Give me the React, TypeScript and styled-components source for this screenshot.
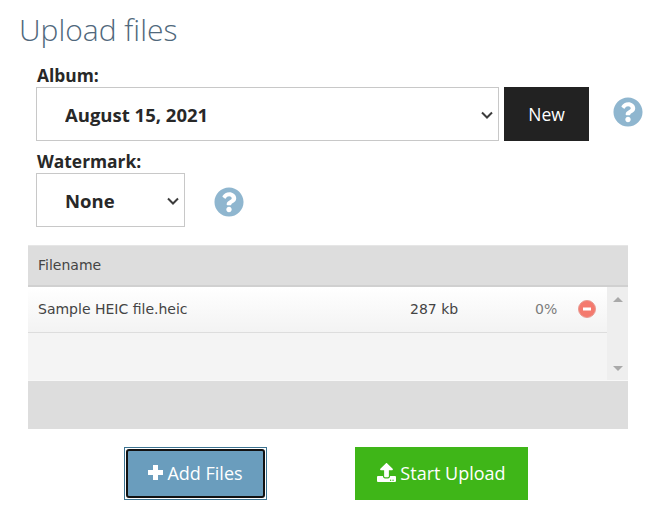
import { createGlobalStyle } from "styled-components";
import styled from "styled-components";
import { FaQuestionCircle, FaUpload } from "react-icons/fa";

const GlobalStyle = createGlobalStyle`
    html, body {
        margin: 0;
        padding: 0;
        background: #fff;
        font-family: "Open Sans", "Liberation Sans", sans-serif;
        color: #282828;
    }
`;

const Page = styled.div`
    width: 654px;
    height: 518px;
    overflow: hidden;
`;

const Title = styled.h1`
    margin: 0;
    padding: 12px 0 0 19px;
    height: 36px;
    font-size: 30px;
    line-height: 36px;
    font-weight: 300;
    color: #50687c;
`;

const Form = styled.div`
    display: flex;
    flex-direction: column;
    padding: 16px 0 0 36px;
`;

const Label = styled.label`
    display: block;
    padding-left: 1px;
    height: 23px;
    font-size: 17.4px;
    line-height: 23px;
    font-weight: 700;
`;

const Row = styled.div<{ $gap: number }>`
    display: flex;
    align-items: center;
    height: 54px;
    margin-bottom: 9px;
    gap: ${(props) => props.$gap}px;
`;

const SelectBox = styled.div<{ $width: number }>`
    position: relative;
    box-sizing: border-box;
    width: ${(props) => props.$width}px;
    height: 54px;
    border: 1px solid #c8c8c8;
    background: #fff;
`;

const Select = styled.select`
    appearance: none;
    display: block;
    width: 100%;
    height: 100%;
    border: 0;
    outline: 0;
    background: transparent;
    padding: 0 28px;
    font-family: inherit;
    font-size: 18.5px;
    font-weight: 700;
    color: #282828;
`;

const Chevron = styled.svg`
    position: absolute;
    right: 5px;
    top: 23px;
    width: 12px;
    height: 8px;
    pointer-events: none;
`;

const NewButton = styled.button`
    width: 85px;
    height: 54px;
    border: 0;
    padding: 0;
    background: #222;
    color: #fff;
    font-family: inherit;
    font-size: 17.5px;
`;

const HelpIcon = styled(FaQuestionCircle)<{ $left: number; $top: number }>`
    display: block;
    flex: none;
    margin-left: ${(props) => props.$left}px;
    margin-top: ${(props) => props.$top}px;
    width: 30px;
    height: 30px;
    color: #8fb6cf;
`;

const Uploader = styled.div`
    margin: 9px 0 0 28px;
    width: 600px;
    font-family: "DejaVu Sans", Verdana, sans-serif;
    font-size: 14px;
    color: #444;
`;

const Header = styled.div`
    box-sizing: border-box;
    height: 42px;
    padding: 0 0 2px 10px;
    display: flex;
    align-items: center;
    background: #ddd;
    border-top: 1px solid #e6e6e6;
    border-bottom: 2px solid #d0d0d0;
`;

const Body = styled.div`
    display: flex;
    height: 93px;
    background: #f4f4f4;
`;

const FileList = styled.div`
    flex: 1;
`;

const FileRow = styled.div`
    box-sizing: border-box;
    height: 46px;
    display: flex;
    align-items: center;
    padding: 0 0 1px 10px;
    background: linear-gradient(#fff, #f3f3f3);
    border-bottom: 1px solid #ddd;
`;

const FileName = styled.div`
    width: 372px;
`;

const FileSize = styled.div`
    width: 125px;
`;

const FilePercent = styled.div`
    width: 43px;
    color: #7c7c7c;
`;

const RemoveIcon = styled.svg`
    width: 18px;
    height: 18px;
    display: block;
`;

const Scrollbar = styled.div`
    width: 21px;
    background: #eee;
    display: flex;
    flex-direction: column;
    align-items: center;
    justify-content: space-between;
    padding: 10px 0 9px;
    box-sizing: border-box;
`;

const Arrow = styled.div<{ $up?: boolean }>`
    width: 0;
    height: 0;
    border-left: 5px solid transparent;
    border-right: 5px solid transparent;
    ${(props) => (props.$up ? "border-bottom: 5px solid #a9a9a9;" : "border-top: 5px solid #a9a9a9;")}
`;

const Footer = styled.div`
    height: 49px;
    box-sizing: border-box;
    background: #ddd;
    border-top: 1px solid #f8f8f8;
`;

const Actions = styled.div`
    display: flex;
    margin: 18px 0 0 124px;
    gap: 88px;
`;

const ActionButton = styled.button<{ $width: number; $color: string }>`
    display: flex;
    align-items: center;
    justify-content: center;
    gap: 4px;
    box-sizing: border-box;
    width: ${(props) => props.$width}px;
    height: 53px;
    padding: 0 0 2px;
    border: 0;
    background: ${(props) => props.$color};
    color: #fff;
    font-family: "Open Sans", sans-serif;
    font-size: 18px;
`;

const UploadGlyph = styled(FaUpload)`
    display: block;
    width: 19px;
    height: 19px;
`;

const PlusGlyph = styled.svg`
    display: block;
    width: 15px;
    height: 15px;
`;

// focus ring: teal edge, thin white gap, then a dark rounded outline
const FocusFrame = styled.div`
    box-sizing: border-box;
    width: 143px;
    height: 53px;
    padding: 1px;
    border: 1px solid #3c7391;
    background: #fff;
`;

const FocusedButton = styled(ActionButton)`
    width: 100%;
    height: 100%;
    border: 2px solid #111;
    border-radius: 3px;
`;

export default function App() {
    return (
        <Page>
            <GlobalStyle />
            <Title>Upload files</Title>
            <Form>
                <Label>Album:</Label>
                <Row $gap={5}>
                    <SelectBox $width={463}>
                        <Select defaultValue="aug">
                            <option value="aug">August 15, 2021</option>
                        </Select>
                        <Chevron viewBox="0 0 12 8">
                            <path d="M1 1.5l5 5 5-5" fill="none" stroke="#3c3c3c" strokeWidth="2" />
                        </Chevron>
                    </SelectBox>
                    <NewButton>New</NewButton>
                    <HelpIcon $left={19} $top={-4} />
                </Row>
                <Label>Watermark:</Label>
                <Row $gap={0}>
                    <SelectBox $width={149}>
                        <Select defaultValue="none">
                            <option value="none">None</option>
                        </Select>
                        <Chevron viewBox="0 0 12 8">
                            <path d="M1 1.5l5 5 5-5" fill="none" stroke="#3c3c3c" strokeWidth="2" />
                        </Chevron>
                    </SelectBox>
                    <HelpIcon $left={29} $top={4} />
                </Row>
            </Form>
            <Uploader>
                <Header>Filename</Header>
                <Body>
                    <FileList>
                        <FileRow>
                            <FileName>Sample HEIC file.heic</FileName>
                            <FileSize>287 kb</FileSize>
                            <FilePercent>0%</FilePercent>
                            <RemoveIcon viewBox="0 0 18 18">
                                <circle cx="9" cy="9" r="8.5" fill="#f47a6e" stroke="#e89a92" />
                                <rect x="5" y="7.5" width="8" height="3" fill="#fff" />
                            </RemoveIcon>
                        </FileRow>
                    </FileList>
                    <Scrollbar>
                        <Arrow $up />
                        <Arrow />
                    </Scrollbar>
                </Body>
                <Footer />
            </Uploader>
            <Actions>
                <FocusFrame>
                    <FocusedButton $width={143} $color="#6a9dbd">
                        <PlusGlyph viewBox="0 0 15 15">
                            <path d="M5 0h5v5h5v5h-5v5H5v-5H0V5h5z" fill="#fff" />
                        </PlusGlyph>
                        Add Files
                    </FocusedButton>
                </FocusFrame>
                <ActionButton $width={173} $color="#3fb618">
                    <UploadGlyph />
                    Start Upload
                </ActionButton>
            </Actions>
        </Page>
    );
}
